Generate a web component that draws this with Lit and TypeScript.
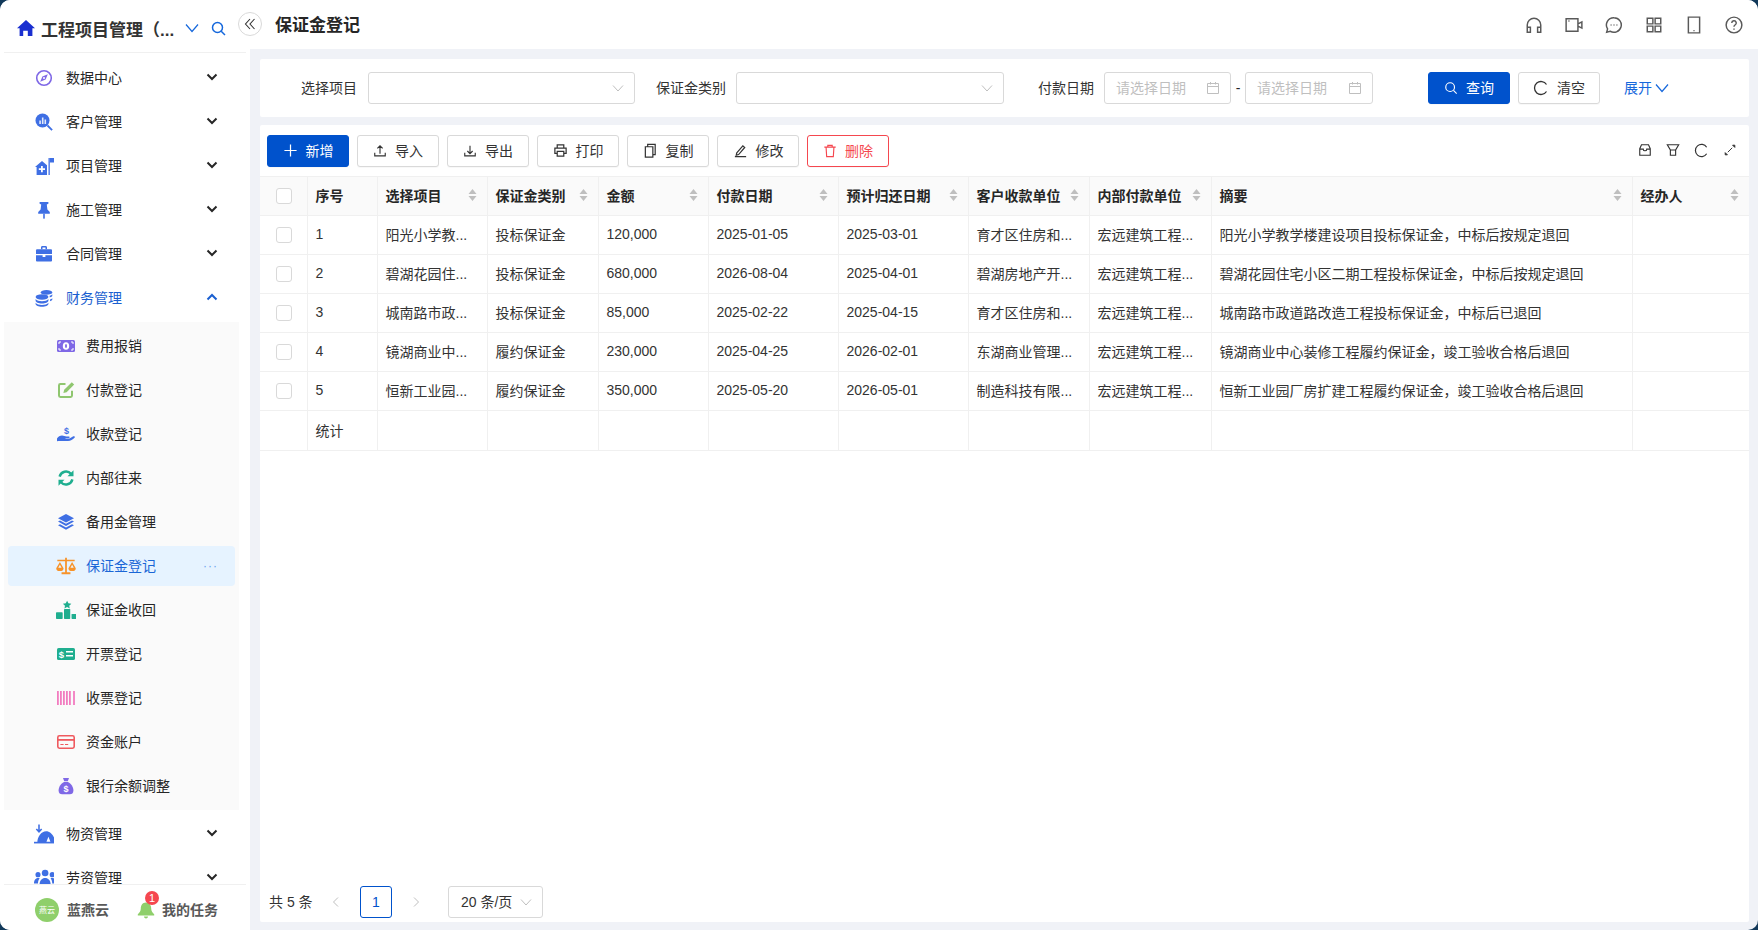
import { LitElement, html, svg, css, SVGTemplateResult, TemplateResult } from 'lit';
import { customElement } from 'lit/decorators.js';
import { classMap } from 'lit/directives/class-map.js';

const BLUE = '#3f6fe4';
const PURPLE = '#7f68e6';
const TEAL = '#1fae8f';

const icon = (body: SVGTemplateResult, size = 18, box = 18) =>
  html`<svg width=${size} height=${size} viewBox="0 0 ${box} ${box}">${body}</svg>`;

const menuIcons: Record<string, TemplateResult> = {
  compass: icon(svg`<circle cx="9" cy="9" r="7.3" fill="none" stroke="${PURPLE}" stroke-width="1.6"/><path d="M12.8 5.2 10.6 10.6 5.2 12.8 7.4 7.4z" fill="${PURPLE}"/><circle cx="9" cy="9" r="1" fill="#fff"/>`),
  search: icon(svg`<circle cx="7.5" cy="7.5" r="7" fill="${BLUE}"/><path d="M12.5 12.5l4.6 4.6" stroke="${BLUE}" stroke-width="1.8" fill="none"/><path d="M4.3 7.5h1.6V11H4.3zM6.9 4.500h1.600V11H6.900zM9.500 6.500h1.600V11H9.500z" fill="#fff" opacity=".85"/>`),
  house: icon(svg`<path d="M0 10 7 4l5 4.200V18H1.600v-8z" fill="${BLUE}"/><path d="M6 9h1.800v2.200H10V13H7.800v2.200H6V13H3.800v-1.800H6z" fill="#fff"/><path d="M13.500 1h1.300v17h-1.300z" fill="${BLUE}"/><path d="M14.800 1H19v4.600h-4.200z" fill="${BLUE}"/>`, 19, 19),
  pin: icon(svg`<path d="M4.600 1h8.800v1.800l-1.600.8.600 5 2.400 2.400v1.700H3.200V11l2.400-2.400.6-5-1.600-.8z" fill="${BLUE}"/><path d="M8.200 12.700h1.600v4.600L9 18l-.8-.7z" fill="${BLUE}"/>`),
  case: icon(svg`<path d="M6 4.200V2.400C6 1.600 6.600 1 7.400 1h3.200c.8 0 1.400.6 1.400 1.400v1.800h-1.500V2.600h-3v1.600z" fill="${BLUE}"/><path d="M1 5.400c0-.7.600-1.200 1.200-1.200h13.600c.7 0 1.200.5 1.200 1.200V9H1z" fill="${BLUE}"/><path d="M1 10.300h6.600v1.600h2.800v-1.600H17v5.100c0 .7-.5 1.200-1.200 1.200H2.200c-.6 0-1.200-.5-1.200-1.200z" fill="${BLUE}"/>`),
  coins: icon(svg`<ellipse cx="7" cy="8" rx="6.400" ry="2.700" fill="${BLUE}"/><path d="M.6 10c1 1.600 3.600 2.200 6.400 2.200s5.400-.6 6.400-2.200v1.700c0 1.500-2.900 2.700-6.400 2.700S.6 13.200.6 11.700z" fill="${BLUE}"/><path d="M.6 13.800c1 1.600 3.600 2.200 6.400 2.200s5.400-.6 6.400-2.200V15c0 1.500-2.900 2.700-6.400 2.700S.6 16.500.6 15z" fill="${BLUE}"/><ellipse cx="11.500" cy="3.400" rx="5.800" ry="2.400" fill="${BLUE}"/><path d="M14.600 6.800c1.200-.3 2.100-.8 2.700-1.500v1.400c0 .7-1 1.300-2.500 1.700zM15 10.600c1-.3 1.800-.8 2.300-1.400v1.300c0 .7-.9 1.300-2.300 1.700z" fill="${BLUE}"/>`),
  bill: icon(svg`<rect x="0" y="3" width="18" height="12" rx="1.500" fill="${PURPLE}"/><ellipse cx="9" cy="9" rx="3.200" ry="3.800" fill="#fff"/><ellipse cx="9" cy="9" rx="1" ry="2" fill="${PURPLE}"/><path d="M2 5h2M14 5h2M2 13h2M14 13h2M2 5v2M16 5v2M2 11v2M16 11v2" stroke="#fff" stroke-width="1" fill="none"/>`),
  edit: icon(svg`<path d="M8.500 3H3.400C2.500 3 2 3.500 2 4.400v10.200c0 .9.500 1.400 1.400 1.400h10.200c.9 0 1.400-.5 1.400-1.400V9.800" fill="none" stroke="#8fc66f" stroke-width="2"/><path d="M14.800 1.200 17.200 3.400 9.600 11.200l-3.200.8.800-3.200z" fill="#8fc66f"/>`),
  hand: icon(svg`<path d="M0 13.500c1.200-2 3-3 5-3 1.600 0 3 1 4.500 1H12c.8 0 1 1.500-.2 1.500H8.500v.6h4l3.800-2.300c1.100-.6 2.100.6 1.200 1.500-1.800 1.700-3.800 3.200-6.500 3.200H3.500c-1.500 0-2.700.2-3.500.2z" fill="${BLUE}"/><text x="9.500" y="8.500" font-size="9" font-weight="700" text-anchor="middle" fill="${BLUE}" font-family="Liberation Sans">$</text>`),
  sync: icon(svg`<path d="M2.600 7.600A6.600 6.600 0 0 1 14 4.800" fill="none" stroke="${TEAL}" stroke-width="2.400"/><path d="M16.500 1.200v6h-6z" fill="${TEAL}"/><path d="M15.400 10.400A6.600 6.600 0 0 1 4 13.200" fill="none" stroke="${TEAL}" stroke-width="2.400"/><path d="M1.500 16.800v-6h6z" fill="${TEAL}"/>`),
  layers: icon(svg`<path d="M9 1 17 5.200 9 9.600 1 5.200z" fill="${BLUE}"/><path d="M1 8.500 3 7.500 9 10.800 15 7.500 17 8.500 9 13z" fill="${BLUE}"/><path d="M1 12.200 3 11.200 9 14.500 15 11.200 17 12.200 9 16.800z" fill="${BLUE}"/>`),
  scale: icon(svg`<path d="M8.200 1.500h1.600v1.800h7v1.400h-7v10H13v1.700H5v-1.700h3.200v-10h-7V3.300h7z" fill="#f7932a"/><path d="M3.500 5.500 6.800 11a3.300 2.600 0 0 1-6.600 0zM3.500 7.800 2 10.600h3zM14.500 5.500l3.300 5.500a3.300 2.600 0 0 1-6.600 0zM14.500 7.800 13 10.600h3z" fill="#f7932a" fill-rule="evenodd"/>`, 20, 18),
  podium: icon(svg`<rect x="0" y="11" width="6" height="6" rx=".6" fill="${TEAL}"/><rect x="7.200" y="8" width="5.600" height="9" rx=".6" fill="${TEAL}"/><rect x="14" y="12.500" width="6" height="4.500" rx=".6" fill="${TEAL}"/><path d="M10 .6l1.200 2.400 2.600.3-1.900 1.800.5 2.500L10 6.400 7.600 7.600l.5-2.500-1.900-1.800 2.600-.3z" fill="${TEAL}"/>`, 20, 18),
  invoice: icon(svg`<rect x="0" y="3" width="18" height="12" rx="1.600" fill="${TEAL}"/><text x="4.500" y="12.600" font-size="9.500" font-weight="700" text-anchor="middle" fill="#fff" font-family="Liberation Sans">$</text><path d="M9 6.800h7M9 10.800h7" stroke="#fff" stroke-width="1.400"/>`),
  barcode: icon(svg`<path d="M.9 2v14M3.900 2v14M6.900 2v14M9.900 2v14M12.900 2v14M17 2v14" stroke="#f27cc0" stroke-width="1.800" fill="none"/>`),
  card: icon(svg`<rect x=".8" y="2.800" width="16.400" height="12.400" rx="1.600" fill="none" stroke="#ef5a5f" stroke-width="1.600"/><path d="M1 6h16v1.800H1z" fill="#ef5a5f"/><path d="M3.400 11.500h3.200M8 11.500h3.200" stroke="#ef5a5f" stroke-width="1.200"/>`),
  bag: icon(svg`<path d="M6 1h6L10.800 4.200H7.200z" fill="${PURPLE}"/><path d="M7 5h4c3.200 1.500 5.400 5 5.400 8.500 0 2.800-1.500 3.800-3.500 3.800H5.100c-2 0-3.500-1-3.500-3.800C1.600 10 3.800 6.500 7 5z" fill="${PURPLE}"/><text x="9" y="14.800" font-size="9" font-weight="700" text-anchor="middle" fill="#fff" font-family="Liberation Sans">$</text>`),
  tent: icon(svg`<path d="M3 16.500C3 11.500 6.500 6.500 11 6.500c4 0 8 5 8 10z" fill="${BLUE}"/><path d="M0 16h19.500v1.500H0z" fill="${BLUE}"/><path d="M13 11.500l1.800 4.500h-3.600z" fill="#fff"/><path d="M4.500 .5v6M2.100 4.500 4.500 7l2.400-2.500" fill="none" stroke="${BLUE}" stroke-width="1.400"/>`, 20, 18),
  people: icon(svg`<circle cx="10" cy="4.500" r="3" fill="${BLUE}"/><circle cx="3.600" cy="6" r="2.300" fill="${BLUE}"/><circle cx="16.400" cy="6" r="2.300" fill="${BLUE}"/><path d="M5 15c0-3.500 2-6 5-6s5 2.500 5 6z" fill="${BLUE}"/><path d="M0 14c0-3 1.400-5 3.600-5 .6 0 1.100.1 1.500.3C4 10.800 3.600 12.200 3.600 14zM20 14c0-3-1.400-5-3.600-5-.6 0-1.100.1-1.500.3 1.100 1.500 1.500 2.900 1.500 4.700z" fill="${BLUE}"/>`, 20, 18),
};

const line = (body: SVGTemplateResult, size = 14) =>
  html`<svg width=${size} height=${size} viewBox="0 0 16 16" fill="none" stroke="currentColor" stroke-width="1.3">${body}</svg>`;

const glyphs = {
  down: html`<svg width="12" height="12" viewBox="0 0 12 12" fill="none" stroke="#262626" stroke-width="2"><path d="M1.500 3.500 6 8l4.500-4.500"/></svg>`,
  up: html`<svg width="12" height="12" viewBox="0 0 12 12" fill="none" stroke="#1a5fd0" stroke-width="2"><path d="M1.500 8.500 6 4l4.500 4.500"/></svg>`,
  caret: html`<svg width="14" height="14" viewBox="0 0 14 14" fill="none" stroke="currentColor" stroke-width="1"><path d="M2 4.500 7 10l5-5.500"/></svg>`,
  caretLg: html`<svg width="14" height="14" viewBox="0 0 14 14" fill="none" stroke="currentColor" stroke-width="1.2"><path d="M1 3.500 7 10.500l6-7"/></svg>`,
  calendar: html`<svg width="14" height="14" viewBox="0 0 14 14" fill="none" stroke="#bfbfbf" stroke-width="1"><path d="M1.500 2.500h11v10h-11zM1.500 5.500h11M4.500 1v2.500M9.500 1v2.500"/></svg>`,
  sort: html`<svg width="9" height="14" viewBox="0 0 9 14" fill="#bfbfbf"><path d="M4.500 1 8.500 6h-8zM4.500 13 .5 8h8z"/></svg>`,
};

const tools: [string, TemplateResult][] = [
  ['导入', line(svg`<path d="M8 11V2.500M5 5l3-3 3 3M2 10v3.500h12V10"/>`)],
  ['导出', line(svg`<path d="M8 2v8.500M5 8l3 3 3-3M2 10v3.500h12V10"/>`)],
  ['打印', line(svg`<path d="M4.500 5V2h7v3M4.500 11H2V5.500h12V11h-2.500M4.500 9h7v5h-7z"/>`, 15)],
  ['复制', line(svg`<path d="M2.500 4h8v11h-8zM5 4V1.500h8v11h-2.500"/>`, 15)],
  ['修改', line(svg`<path d="M4 10.500 10.500 3l2 1.800L6 12.300l-2.500.6zM2 14.500h12"/>`, 15)],
];

const subMenu: [string, string][] = [
  ['费用报销', 'bill'], ['付款登记', 'edit'], ['收款登记', 'hand'], ['内部往来', 'sync'],
  ['备用金管理', 'layers'], ['保证金登记', 'scale'], ['保证金收回', 'podium'], ['开票登记', 'invoice'],
  ['收票登记', 'barcode'], ['资金账户', 'card'], ['银行余额调整', 'bag'],
];

const columns = ['选择项目', '保证金类别', '金额', '付款日期', '预计归还日期', '客户收款单位', '内部付款单位', '摘要', '经办人'];
const colWidths = [47, 70, 110, 111, 110, 130, 130, 121, 122, 421, 117];

const rows = [
  ['1', '阳光小学教...', '投标保证金', '120,000', '2025-01-05', '2025-03-01', '育才区住房和...', '宏远建筑工程...', '阳光小学教学楼建设项目投标保证金，中标后按规定退回', ''],
  ['2', '碧湖花园住...', '投标保证金', '680,000', '2026-08-04', '2025-04-01', '碧湖房地产开...', '宏远建筑工程...', '碧湖花园住宅小区二期工程投标保证金，中标后按规定退回', ''],
  ['3', '城南路市政...', '投标保证金', '85,000', '2025-02-22', '2025-04-15', '育才区住房和...', '宏远建筑工程...', '城南路市政道路改造工程投标保证金，中标后已退回', ''],
  ['4', '镜湖商业中...', '履约保证金', '230,000', '2025-04-25', '2026-02-01', '东湖商业管理...', '宏远建筑工程...', '镜湖商业中心装修工程履约保证金，竣工验收合格后退回', ''],
  ['5', '恒新工业园...', '履约保证金', '350,000', '2025-05-20', '2026-05-01', '制造科技有限...', '宏远建筑工程...', '恒新工业园厂房扩建工程履约保证金，竣工验收合格后退回', ''],
];

@customElement('app-root')
export class AppRoot extends LitElement {
  static styles = css`
    :host {
      display: block;
      width: 100vw;
      height: 100vh;
      overflow: hidden;
      background: #12395a;
      color: #262626;
      font: 14px "Liberation Sans", "Noto Sans CJK SC", sans-serif;
    }
    svg { display: block; flex: none; }
    .shell {
      position: relative;
      display: flex;
      height: 100%;
      border-radius: 10px;
      overflow: hidden;
      background: #f0f2f7;
    }
    .txt { padding-bottom: 2px; }

    .side {
      display: flex;
      flex-direction: column;
      flex: none;
      width: 250px;
      background: #fff;
    }
    .brand {
      display: flex;
      align-items: center;
      flex: none;
      height: 53px;
      margin: 0 4px;
      padding: 4px 0 0 13px;
      box-sizing: border-box;
      border-bottom: 1px solid #f0f0f0;
      color: #1668dc;
    }
    .brand-name {
      width: 134px;
      margin: 0 10px 0 6px;
      font-size: 17px;
      font-weight: 700;
      color: #333;
      white-space: nowrap;
    }
    .brand-search { margin-left: 12px; }
    .collapse {
      position: absolute;
      left: 238px;
      top: 12px;
      display: flex;
      align-items: center;
      justify-content: center;
      width: 24px;
      height: 24px;
      box-sizing: border-box;
      border: 1px solid #d9d9d9;
      border-radius: 50%;
      background: #fff;
      color: #333;
    }
    .menu {
      flex: 1;
      min-height: 0;
      overflow: hidden;
      padding-top: 3px;
    }
    .item {
      display: flex;
      align-items: center;
      height: 44px;
      padding-left: 34px;
      box-sizing: border-box;
    }
    .item .ico {
      display: flex;
      justify-content: center;
      width: 20px;
      margin-right: 12px;
    }
    .item .txt { flex: 1; }
    .item .arrow { margin-right: 32px; margin-top: -3px; }
    .item.open { color: #1a5fd0; }
    .sub {
      display: flex;
      flex-direction: column;
      gap: 4px;
      margin: 2px 11px 2px 4px;
      padding: 4px;
      background: #fafafa;
    }
    .sub-item {
      display: flex;
      align-items: center;
      height: 40px;
      border-radius: 4px;
    }
    .sub-item .ico {
      display: flex;
      justify-content: center;
      width: 20px;
      margin: 0 10px 0 48px;
    }
    .sub-item .txt { flex: 1; }
    .sub-item.active { background: #e6f3ff; color: #1a66d6; }
    .sub-item .more {
      margin-right: 17px;
      color: #6aa5ee;
      letter-spacing: 1px;
      font-size: 12px;
    }
    .side-foot {
      display: flex;
      align-items: center;
      flex: none;
      height: 46px;
      margin: 0 4px;
      padding: 4px 0 0 31px;
      box-sizing: border-box;
      border-top: 1px solid #f0f0f0;
      font-weight: 600;
      color: #595959;
    }
    .avatar {
      display: flex;
      align-items: center;
      justify-content: center;
      width: 24px;
      height: 24px;
      margin-right: 8px;
      border-radius: 50%;
      background: #8fcf6b;
      color: #fff;
      font-size: 8px;
      font-weight: 400;
    }
    .bell {
      position: relative;
      margin: 0 6px 0 27px;
    }
    .badge {
      position: absolute;
      left: 9px;
      top: -9px;
      width: 14px;
      height: 14px;
      border-radius: 50%;
      background: #f5474f;
      color: #fff;
      font-size: 11px;
      font-weight: 400;
      line-height: 14px;
      text-align: center;
    }

    .main {
      display: flex;
      flex-direction: column;
      flex: 1;
      min-width: 0;
    }
    .top {
      display: flex;
      align-items: center;
      flex: none;
      height: 49px;
      padding: 0 15px 0 25px;
      box-sizing: border-box;
      background: #fff;
    }
    .top h1 {
      flex: 1;
      margin: 0;
      padding-bottom: 2px;
      font-size: 17px;
      font-weight: 700;
      color: #262626;
    }
    .top-icons { display: flex; gap: 22px; color: #595959; }
    .content {
      display: flex;
      flex-direction: column;
      flex: 1;
      min-height: 0;
      gap: 8px;
      padding: 10px 9px 8px 10px;
    }
    .filter {
      display: flex;
      align-items: center;
      flex: none;
      height: 58px;
      padding-left: 41px;
      border-radius: 2px;
      background: #fff;
    }
    .flabel { width: 57px; margin-right: 10px; padding-bottom: 2px; white-space: nowrap; color: #333; }
    .flabel.w70 { width: 70px; text-align: right; }
    .select {
      display: flex;
      align-items: center;
      justify-content: flex-end;
      width: 267px;
      height: 32px;
      margin-right: 21px;
      padding-right: 9px;
      box-sizing: border-box;
      border: 1px solid #d9d9d9;
      border-radius: 3px;
      color: #bfbfbf;
    }
    .select.w268 { width: 268px; margin-right: 20px; }
    .date {
      display: flex;
      align-items: center;
      justify-content: space-between;
      width: 127px;
      height: 32px;
      padding: 0 10px 0 11px;
      box-sizing: border-box;
      border: 1px solid #d9d9d9;
      border-radius: 3px;
      color: #bfbfbf;
    }
    .dash + .date { width: 128px; }
    .dash { width: 14px; text-align: center; }
    .btn {
      display: flex;
      align-items: center;
      justify-content: center;
      gap: 8px;
      width: 82px;
      height: 32px;
      box-sizing: border-box;
      border: 1px solid #d9d9d9;
      border-radius: 3px;
      background: #fff;
      color: #333;
      box-shadow: 0 1px 1px rgba(0, 0, 0, 0.03);
    }
    .btn.primary { border-color: #0052cc; background: #0052cc; color: #fff; }
    .btn.danger { border-color: #f5474f; color: #f5474f; }
    .filter-actions { display: flex; gap: 8px; margin-left: 55px; }
    .expand {
      display: flex;
      align-items: center;
      gap: 3px;
      margin-left: 24px;
      color: #1668dc;
    }

    .card {
      display: flex;
      flex-direction: column;
      flex: 1;
      min-height: 0;
      border-radius: 2px;
      background: #fff;
    }
    .toolbar {
      display: flex;
      align-items: center;
      flex: none;
      gap: 8px;
      height: 51px;
      padding: 0 12px 0 7px;
      box-sizing: border-box;
    }
    .tool-icons {
      display: flex;
      gap: 14px;
      margin-left: auto;
      color: #333;
    }
    table {
      flex: none;
      width: 1489px;
      table-layout: fixed;
      border-collapse: collapse;
    }
    th, td {
      height: 36px;
      padding: 0 8px 2px;
      border: 1px solid #f0f0f0;
      text-align: left;
      white-space: nowrap;
      overflow: hidden;
    }
    th:first-child, td:first-child { border-left: 0; padding: 0 0 0 16px; }
    th:last-child, td:last-child { border-right: 0; }
    th { background: #fafafa; font-weight: 700; color: #262626; }
    td { color: #333; }
    tr.total td { height: 37px; }
    .th-in { display: flex; align-items: center; justify-content: space-between; padding-right: 2px; }
    .check {
      width: 16px;
      height: 16px;
      box-sizing: border-box;
      border: 1px solid #d9d9d9;
      border-radius: 3px;
      background: #fff;
    }
    .pager {
      display: flex;
      align-items: center;
      flex: none;
      height: 32px;
      margin-top: auto;
      margin-bottom: 4px;
      padding-left: 9px;
      color: #333;
    }
    .total-count { width: 51px; padding-bottom: 2px; }
    .page-nav {
      display: flex;
      align-items: center;
      justify-content: center;
      width: 32px;
      height: 32px;
      color: #bfbfbf;
    }
    .page-no {
      display: flex;
      align-items: center;
      justify-content: center;
      width: 32px;
      height: 32px;
      margin: 0 8px;
      box-sizing: border-box;
      border: 1px solid #0052cc;
      border-radius: 3px;
      color: #0052cc;
    }
    .page-size {
      display: flex;
      align-items: center;
      justify-content: space-between;
      width: 95px;
      height: 32px;
      margin-left: 16px;
      padding: 0 9px 0 12px;
      box-sizing: border-box;
      border: 1px solid #d9d9d9;
      border-radius: 3px;
    }
    .page-size svg { color: #bfbfbf; }
  `;

  private menuItem(label: string, ico: string, open = false) {
    return html`<div class=${classMap({ item: true, open })}>
      <span class="ico">${menuIcons[ico]}</span>
      <span class="txt">${label}</span>
      <span class="arrow">${open ? glyphs.up : glyphs.down}</span>
    </div>`;
  }

  private subItem([label, ico]: [string, string]) {
    const active = label === '保证金登记';
    return html`<div class=${classMap({ 'sub-item': true, active })}>
      <span class="ico">${menuIcons[ico]}</span>
      <span class="txt">${label}</span>
      ${active ? html`<span class="more">···</span>` : ''}
    </div>`;
  }

  private renderSide() {
    return html`<aside class="side">
      <div class="brand">
        <svg width="18" height="18" viewBox="0 0 18 18" fill="#1a2fd0"><path d="M9 1l9 8.200h-2.600V17h-4.600v-5.200H6.200V17H2.600V9.200H0z"/></svg>
        <span class="brand-name">工程项目管理（...</span>
        ${glyphs.caretLg}
        <span class="brand-search"><svg width="15" height="15" viewBox="0 0 15 15" fill="none" stroke="currentColor" stroke-width="1.5"><circle cx="6.500" cy="6.500" r="5"/><path d="M10.200 10.200 14 14"/></svg></span>
      </div>
      <div class="menu">
        ${this.menuItem('数据中心', 'compass')}
        ${this.menuItem('客户管理', 'search')}
        ${this.menuItem('项目管理', 'house')}
        ${this.menuItem('施工管理', 'pin')}
        ${this.menuItem('合同管理', 'case')}
        ${this.menuItem('财务管理', 'coins', true)}
        <div class="sub">${subMenu.map(s => this.subItem(s))}</div>
        ${this.menuItem('物资管理', 'tent')}
        ${this.menuItem('劳资管理', 'people')}
      </div>
      <div class="side-foot">
        <span class="avatar">燕云</span>
        <span class="txt">蓝燕云</span>
        <span class="bell">
          <svg width="20" height="20" viewBox="0 0 20 20" fill="#8fcf6b"><path d="M10 2.500c3.500 0 5.200 2.800 5.200 6 0 2.500 1.300 4.300 3 5.700v1.300H1.800v-1.300c1.700-1.400 3-3.200 3-5.700 0-3.200 1.700-6 5.200-6z"/><path d="M8 16.500h4c0 1.200-1 2-2 2s-2-.8-2-2z"/></svg>
          <span class="badge">1</span>
        </span>
        <span class="txt">我的任务</span>
      </div>
    </aside>
    <div class="collapse"><svg width="12" height="12" viewBox="0 0 12 12" fill="none" stroke="currentColor" stroke-width="1.1"><path d="M6 1 1.500 6 6 11M10.500 1 6 6l4.500 5"/></svg></div>`;
  }

  private renderTop() {
    return html`<header class="top">
      <h1>保证金登记</h1>
      <div class="top-icons">
        ${line(svg`<path d="M2 10.500V8a6 6 0 0 1 12 0v2.500M2 10h2.800v4.500H2zM11.200 10H14v4.500h-2.800z"/>`, 18)}
        ${line(svg`<path d="M1 2.500h10.500v11H1zM11.500 7l3.500-1.800v5.600l-3.500-1.800M3 4.500h1"/>`, 18)}
        ${line(svg`<path d="M8 1.500a6.500 6.500 0 1 1-3.500 12l-3 .8.800-2.800A6.500 6.500 0 0 1 8 1.500z"/><path d="M5 8h.8M7.600 8h.8M10.200 8h.8"/>`, 18)}
        ${line(svg`<path d="M2 2h5v5H2zM9 2h5v5H9zM2 9h5v5H2zM9 9h5v5H9z"/>`, 18)}
        ${line(svg`<path d="M3 1h10v14H3zM7.500 13h1"/>`, 18)}
        ${line(svg`<circle cx="8" cy="8" r="7"/><path d="M6 6.200a2 2 0 1 1 2.800 1.900c-.6.300-.8.700-.8 1.400M8 11.200v1"/>`, 18)}
      </div>
    </header>`;
  }

  private renderFilter() {
    return html`<section class="filter">
      <span class="flabel">选择项目</span>
      <div class="select">${glyphs.caret}</div>
      <span class="flabel w70">保证金类别</span>
      <div class="select w268">${glyphs.caret}</div>
      <span class="flabel w70">付款日期</span>
      <div class="date"><span class="txt">请选择日期</span>${glyphs.calendar}</div>
      <span class="dash">-</span>
      <div class="date"><span class="txt">请选择日期</span>${glyphs.calendar}</div>
      <div class="filter-actions">
        <div class="btn primary">${line(svg`<circle cx="7" cy="7" r="5"/><path d="M10.800 10.800 14.500 14.500"/>`)}<span class="txt">查询</span></div>
        <div class="btn">${line(svg`<path d="M13.500 4.500A6.500 6.500 0 1 0 13.500 11.500"/>`, 16)}<span class="txt">清空</span></div>
      </div>
      <div class="expand"><span class="txt">展开</span>${glyphs.caretLg}</div>
    </section>`;
  }

  private renderTable() {
    return html`<table>
      <colgroup>${colWidths.map(w => html`<col style="width:${w}px" />`)}</colgroup>
      <thead>
        <tr>
          <th><div class="check"></div></th>
          <th>序号</th>
          ${columns.map(c => html`<th><div class="th-in"><span>${c}</span>${glyphs.sort}</div></th>`)}
        </tr>
      </thead>
      <tbody>
        ${rows.map(r => html`<tr>
          <td><div class="check"></div></td>
          ${r.map(v => html`<td>${v}</td>`)}
        </tr>`)}
        <tr class="total">
          <td></td>
          <td>统计</td>
          ${columns.map(() => html`<td></td>`)}
        </tr>
      </tbody>
    </table>`;
  }

  render() {
    return html`<div class="shell">
      ${this.renderSide()}
      <main class="main">
        ${this.renderTop()}
        <div class="content">
          ${this.renderFilter()}
          <section class="card">
            <div class="toolbar">
              <div class="btn primary">${line(svg`<path d="M8 1.500v13M1.500 8h13"/>`, 15)}<span class="txt">新增</span></div>
              ${tools.map(([label, ico]) => html`<div class="btn">${ico}<span class="txt">${label}</span></div>`)}
              <div class="btn danger">${line(svg`<path d="M1.500 3.500h13M5.500 3.500V1.500h5v2M3.500 3.500l.7 11h7.600l.7-11"/>`)}<span class="txt">删除</span></div>
              <div class="tool-icons">
                ${line(svg`<path d="M4 2h8l2 4.500V14H2V6.500zM2 7h4c0 2.500 4 2.500 4 0h4"/>`)}
                ${line(svg`<path d="M1.500 2h13l-3.500 6v6H5V8zM5 8h6"/>`)}
                ${line(svg`<path d="M13.500 4.500A6.500 6.500 0 1 0 13.500 11.500"/>`, 15)}
                <svg width="14" height="14" viewBox="0 0 16 16" fill="#333" stroke="#333" stroke-width="1.1"><path d="M5.500 10.500l5-5"/><path d="M13.500 2.500v2.500L11 2.500zM2.500 13.500V11L5 13.500z"/></svg>
              </div>
            </div>
            ${this.renderTable()}
            <div class="pager">
              <span class="total-count">共 5 条</span>
              <span class="page-nav"><svg width="12" height="12" viewBox="0 0 12 12" fill="none" stroke="currentColor"><path d="M8 1.500 3.500 6 8 10.500"/></svg></span>
              <span class="page-no">1</span>
              <span class="page-nav"><svg width="12" height="12" viewBox="0 0 12 12" fill="none" stroke="currentColor"><path d="M4 1.500 8.500 6 4 10.500"/></svg></span>
              <div class="page-size"><span class="txt">20 条/页</span>${glyphs.caret}</div>
            </div>
          </section>
        </div>
      </main>
    </div>`;
  }
}
